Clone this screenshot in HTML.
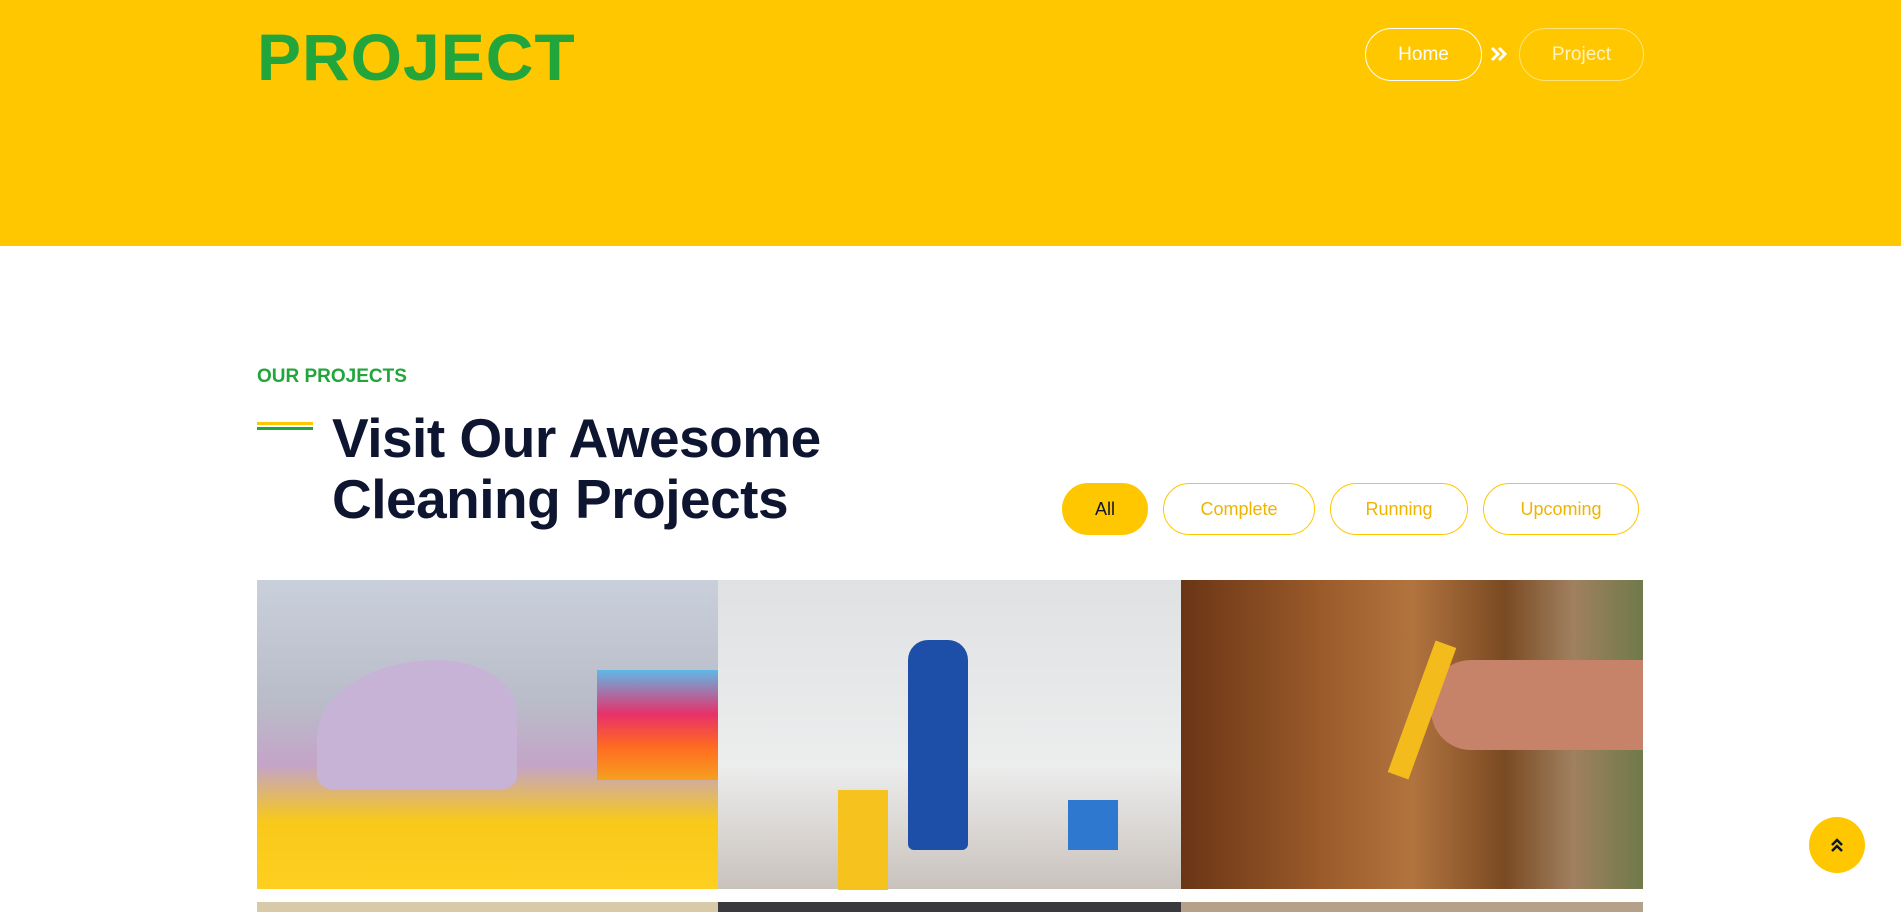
<!DOCTYPE html>
<html><head><meta charset="utf-8"><style>
*{margin:0;padding:0;box-sizing:border-box}
body{width:1901px;height:908px;overflow:hidden;background:#fff;font-family:"Liberation Sans",sans-serif;position:relative}
.hdr{position:absolute;left:0;top:0;width:1901px;height:246px;background:#ffc700}
.title{position:absolute;left:257px;top:19px;font-size:66px;font-weight:900;color:#22a63c;letter-spacing:1px}
.bc{position:absolute;top:28px;height:53px;border:1.5px solid #fff;border-radius:27px;color:#fff;font-size:19px;display:flex;align-items:center;justify-content:center}
.sub{position:absolute;left:257px;top:366px;font-size:19px;font-weight:700;color:#22a63c}
.ln{position:absolute;left:257px;width:56px;height:3px}
.h2{position:absolute;left:332px;top:408px;font-size:55px;line-height:61px;font-weight:700;color:#0d1530;letter-spacing:-0.5px}
.fb{position:absolute;top:483px;height:52px;border:1.5px solid #ffc700;border-radius:26px;color:#f0b400;font-size:18px;display:flex;align-items:center;justify-content:center}
.img{position:absolute;top:580px;height:309px}
.img2{position:absolute;top:902px;height:10px}
.up{position:absolute;left:1809px;top:817px;width:56px;height:56px;border-radius:50%;background:#ffc700;display:flex;align-items:center;justify-content:center}
</style></head><body>
<div class="hdr"></div>
<div class="title">PROJECT</div>
<div class="bc" style="left:1365px;width:117px">Home</div>
<svg style="position:absolute;left:1490px;top:46px" width="18" height="16" viewBox="0 0 18 16"><path d="M2 2 L8 8 L2 14 M9 2 L15 8 L9 14" stroke="#fff" stroke-width="3" fill="none"/></svg>
<div class="bc" style="left:1519px;width:125px;border-color:#ffe27a;color:#fff3c0">Project</div>
<div class="sub">OUR PROJECTS</div>
<div class="ln" style="top:422px;background:#ffc700"></div>
<div class="ln" style="top:427px;background:#22a63c"></div>
<div class="h2">Visit Our Awesome<br>Cleaning Projects</div>
<div class="fb" style="left:1062px;width:86px;background:#ffc700;color:#0d1530">All</div>
<div class="fb" style="left:1163px;width:152px">Complete</div>
<div class="fb" style="left:1330px;width:138px">Running</div>
<div class="fb" style="left:1483px;width:156px">Upcoming</div>
<div class="img" style="left:257px;width:461px;background:linear-gradient(180deg,#c9d0db 0%,#b9bcc8 40%,#c4a4c8 60%,#f8c81a 78%,#ffcf20 100%)">
 <div style="position:absolute;left:340px;top:90px;width:121px;height:110px;background:linear-gradient(180deg,#5fb8e6,#e8306a 40%,#ff6b20 70%,#f5a020)"></div>
 <div style="position:absolute;left:60px;top:80px;width:200px;height:130px;background:#c7b3d6;border-radius:60% 40% 10% 10%"></div>
</div>
<div class="img" style="left:718px;width:463px;background:linear-gradient(180deg,#dfe1e3 0%,#eceded 60%,#c9c2bc 100%)">
 <div style="position:absolute;left:190px;top:60px;width:60px;height:210px;background:#1e4fa8;border-radius:20px 20px 6px 6px"></div>
 <div style="position:absolute;left:120px;top:210px;width:50px;height:100px;background:#f6c21d"></div>
 <div style="position:absolute;left:350px;top:220px;width:50px;height:50px;background:#2f78d0"></div>
</div>
<div class="img" style="left:1181px;width:462px;background:linear-gradient(90deg,#6a3515 0%,#9a5a2a 30%,#b2743f 50%,#7a4a22 70%,#a08060 85%,#6f7a4a 100%)">
 <div style="position:absolute;left:250px;top:80px;width:212px;height:90px;background:#c7826a;border-radius:40px 0 0 40px"></div>
 <div style="position:absolute;left:230px;top:60px;width:22px;height:140px;background:#f3bb1c;transform:rotate(20deg)"></div>
</div>
<div class="img2" style="left:257px;width:461px;background:#d8c9a8"></div>
<div class="img2" style="left:718px;width:463px;background:#3a3a3e"></div>
<div class="img2" style="left:1181px;width:462px;background:#b5a08a"></div>
<div class="up"><svg width="16" height="18" viewBox="0 0 16 18"><path d="M3 9 L8 4 L13 9 M3 15 L8 10 L13 15" stroke="#0d1530" stroke-width="2.5" fill="none"/></svg></div>
</body></html>
